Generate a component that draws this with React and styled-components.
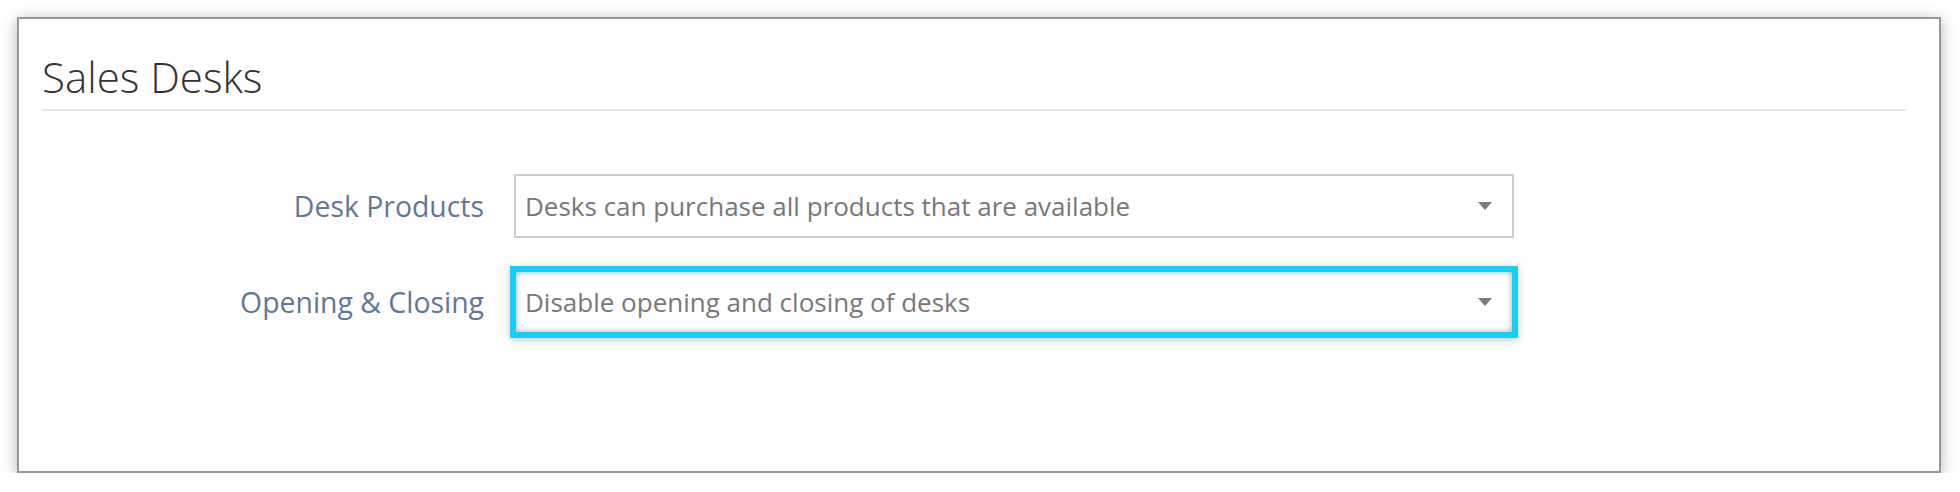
import React from "react";
import styled, { createGlobalStyle } from "styled-components";

const Global = createGlobalStyle`
  html, body { margin: 0; padding: 0; background: #ffffff; }
  body { font-family: "Open Sans", "DejaVu Sans", sans-serif; }
  * { box-sizing: border-box; }
`;

const Page = styled.div`
  padding: 17px 19px 0 17px;
`;

const Panel = styled.section`
  width: 1924px;
  height: 456px;
  background: #ffffff;
  border: 2px solid #979797;
  box-shadow: 0 3px 14px rgba(0, 0, 0, 0.3);
`;

const Header = styled.header`
  margin: 0 33px 0 23px;
  padding: 33px 0 7px;
  border-bottom: 2px solid #e4e4e4;
`;

const Title = styled.h1`
  margin: 0;
  font-size: 42px;
  line-height: 50px;
  font-weight: 300;
  color: #333333;
`;

const Form = styled.div`
  display: flex;
  flex-direction: column;
  gap: 32px;
  padding: 63px 0 0 23px;
`;

const Row = styled.div`
  display: flex;
  align-items: center;
  gap: 30px;
`;

const Label = styled.label`
  width: 442px;
  text-align: right;
  font-size: 28.4px;
  color: #607898;
`;

const Select = styled.div`
  position: relative;
  width: 1000px;
  height: 64px;
  display: flex;
  align-items: center;
  padding: 0 50px 0 9px;
  font-size: 26px;
  color: #787878;
  background: #ffffff;
  border: 2px solid ${(p) => (p.$focused ? "#14d0f6" : "#cccccc")};
  box-shadow: ${(p) =>
    p.$focused
      ? "0 0 0 4px #14d0f6, 0 2px 8px 4px rgba(0,0,0,0.22), inset 0 0 6px rgba(0,0,0,0.35)"
      : "none"};
`;

const Arrow = styled.span`
  position: absolute;
  right: 20px;
  top: 50%;
  margin-top: -4px;
  width: 0;
  height: 0;
  border-left: 7.5px solid transparent;
  border-right: 7.5px solid transparent;
  border-top: 8px solid #7a7a7a;
`;

export default function App() {
  return (
    <>
      <Global />
      <Page>
        <Panel>
          <Header>
            <Title>Sales Desks</Title>
          </Header>
          <Form>
            <Row>
              <Label>Desk Products</Label>
              <Select>
                Desks can purchase all products that are available
                <Arrow />
              </Select>
            </Row>
            <Row>
              <Label>Opening &amp; Closing</Label>
              <Select $focused>
                Disable opening and closing of desks
                <Arrow />
              </Select>
            </Row>
          </Form>
        </Panel>
      </Page>
    </>
  );
}
